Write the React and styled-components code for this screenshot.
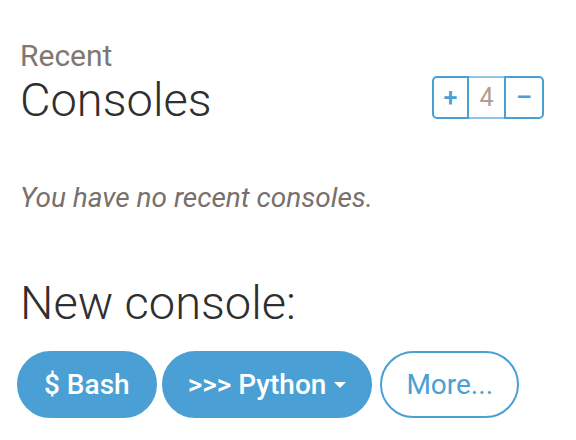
import React from "react";
import styled, { createGlobalStyle } from "styled-components";

const GlobalStyle = createGlobalStyle`
  body {
    margin: 0;
    background: #fff;
    font-family: Roboto, "Liberation Sans", sans-serif;
  }
`;

const Panel = styled.div`
  width: 576px;
  height: 440px;
  box-sizing: border-box;
  padding: 38px 32px 0 20px;
`;

const HeaderRow = styled.div`
  display: flex;
  align-items: flex-start;
  justify-content: space-between;
`;

const Kicker = styled.div`
  font-size: 30px;
  line-height: 36px;
  color: #7f7772;
`;

const Title = styled.h1`
  margin: 0;
  font-size: 47px;
  line-height: 52px;
  font-weight: 300;
  color: #2f2f2f;
`;

const Counter = styled.div`
  display: flex;
  height: 43px;
  margin-top: 38px;
`;

const CounterButton = styled.button`
  width: ${(p) => (p.left ? "37px" : "40px")};
  padding: 0;
  background: #fff;
  border: 2px solid #4a9fd4;
  color: #4a9fd4;
  font-family: Roboto, "Liberation Sans", sans-serif;
  font-size: 25px;
  font-weight: 500;
  border-radius: ${(p) => (p.left ? "5px 0 0 5px" : "0 5px 5px 0")};
`;

const CounterValue = styled.div`
  width: 35px;
  display: flex;
  align-items: center;
  justify-content: center;
  border-top: 2px solid #93c3e4;
  border-bottom: 2px solid #93c3e4;
  color: #b29e8f;
  font-size: 25px;
`;

const Empty = styled.p`
  margin: 56px 0 0;
  font-size: 28px;
  line-height: 32px;
  font-style: italic;
  color: #77706b;
`;

const SubTitle = styled.h2`
  margin: 63px 0 0;
  font-size: 47px;
  line-height: 52px;
  font-weight: 300;
  color: #2f2f2f;
`;

const Buttons = styled.div`
  display: flex;
  gap: 5px;
  margin-top: 22px;
  margin-left: -3px;
`;

const Pill = styled.button`
  height: 67px;
  padding: 0 ${(p) => p.pad};
  border-radius: 34px;
  border: 2px solid #4a9fd4;
  background: ${(p) => (p.outline ? "#fff" : "#4a9fd4")};
  color: ${(p) => (p.outline ? "#4a9fd4" : "#fff")};
  font-family: Roboto, "Liberation Sans", sans-serif;
  font-size: 28px;
  font-weight: ${(p) => (p.outline ? 400 : 500)};
  display: flex;
  align-items: center;
  gap: 8px;
  margin-left: ${(p) => (p.outline ? "3px" : "0")};
`;

const Caret = styled.span`
  width: 0;
  height: 0;
  border-left: 6px solid transparent;
  border-right: 6px solid transparent;
  border-top: 6px solid #fff;
`;

export default function App() {
  return (
    <Panel>
      <GlobalStyle />
      <HeaderRow>
        <div>
          <Kicker>Recent</Kicker>
          <Title>Consoles</Title>
        </div>
        <Counter>
          <CounterButton left>+</CounterButton>
          <CounterValue>4</CounterValue>
          <CounterButton>–</CounterButton>
        </Counter>
      </HeaderRow>
      <Empty>You have no recent consoles.</Empty>
      <SubTitle>New console:</SubTitle>
      <Buttons>
        <Pill pad="25px">$ Bash</Pill>
        <Pill pad="24px">
          &gt;&gt;&gt; Python <Caret />
        </Pill>
        <Pill outline pad="24px">More...</Pill>
      </Buttons>
    </Panel>
  );
}
